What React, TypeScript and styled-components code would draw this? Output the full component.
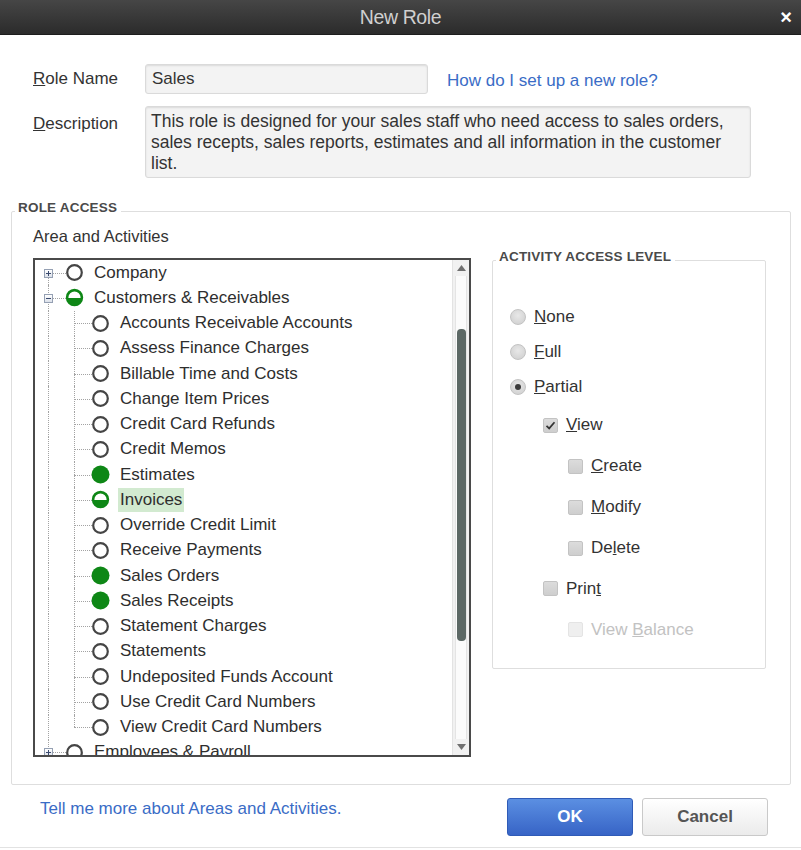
import React from 'react';
import styled, { createGlobalStyle } from 'styled-components';

type NodeState = 'empty' | 'half' | 'full';

type TreeNode = {
  label: string;
  level: 0 | 1;
  state: NodeState;
  expander?: 'plus' | 'minus';
  selected?: boolean;
  first?: boolean;
  last?: boolean;
};

const GREEN = '#0e8716';

const TREE: TreeNode[] = [
  { label: 'Company', level: 0, state: 'empty', expander: 'plus', first: true },
  { label: 'Customers & Receivables', level: 0, state: 'half', expander: 'minus' },
  { label: 'Accounts Receivable Accounts', level: 1, state: 'empty' },
  { label: 'Assess Finance Charges', level: 1, state: 'empty' },
  { label: 'Billable Time and Costs', level: 1, state: 'empty' },
  { label: 'Change Item Prices', level: 1, state: 'empty' },
  { label: 'Credit Card Refunds', level: 1, state: 'empty' },
  { label: 'Credit Memos', level: 1, state: 'empty' },
  { label: 'Estimates', level: 1, state: 'full' },
  { label: 'Invoices', level: 1, state: 'half', selected: true },
  { label: 'Override Credit Limit', level: 1, state: 'empty' },
  { label: 'Receive Payments', level: 1, state: 'empty' },
  { label: 'Sales Orders', level: 1, state: 'full' },
  { label: 'Sales Receipts', level: 1, state: 'full' },
  { label: 'Statement Charges', level: 1, state: 'empty' },
  { label: 'Statements', level: 1, state: 'empty' },
  { label: 'Undeposited Funds Account', level: 1, state: 'empty' },
  { label: 'Use Credit Card Numbers', level: 1, state: 'empty' },
  { label: 'View Credit Card Numbers', level: 1, state: 'empty', last: true },
  { label: 'Employees & Payroll', level: 0, state: 'empty', expander: 'plus' }
];

const GlobalStyle = createGlobalStyle`
  html, body {
    margin: 0;
    padding: 0;
    background: #fff;
  }
  body {
    font-family: 'Liberation Sans', Arial, sans-serif;
    color: #333;
  }
`;

const Dialog = styled.div`
  width: 801px;
  height: 848px;
  box-sizing: border-box;
  display: flex;
  flex-direction: column;
  background: #fff;
  border-bottom: 1px solid #e2e2e2;
`;

const TitleBar = styled.div`
  height: 35px;
  flex-shrink: 0;
  display: grid;
  grid-template-columns: 1fr auto 1fr;
  align-items: center;
  background: linear-gradient(#464646, #2b2b2b);
  border-bottom: 1px solid #1d1d1d;
  box-sizing: border-box;
`;

const Title = styled.div`
  grid-column: 2;
  color: #d0d0d0;
  font-size: 19.5px;
  letter-spacing: -0.4px;
`;

const CloseButton = styled.button`
  justify-self: end;
  margin-right: 9px;
  padding: 0;
  border: 0;
  background: none;
  color: #fff;
  font-family: 'Liberation Sans', Arial, sans-serif;
  font-weight: 700;
  font-size: 20px;
  line-height: 1;
  cursor: pointer;
`;

const Content = styled.div`
  flex: 1;
  padding: 29px 10px 0 11px;
`;

const FormRow = styled.div<{ $top?: number }>`
  display: flex;
  align-items: flex-start;
  padding-left: 22px;
  margin-top: ${(p) => p.$top ?? 0}px;
`;

const FieldLabel = styled.label<{ $padTop: number }>`
  width: 112px;
  flex-shrink: 0;
  padding-top: ${(p) => p.$padTop}px;
  font-size: 17px;
  line-height: 20px;
  color: #333;
`;

const TextField = styled.input`
  width: 283px;
  height: 30px;
  box-sizing: border-box;
  padding: 0 6px;
  border: 1px solid #dadada;
  border-radius: 3px;
  background: #f3f3f3;
  box-shadow: inset 0 1px 2px rgba(0, 0, 0, 0.1);
  font-family: 'Liberation Sans', Arial, sans-serif;
  font-size: 17px;
  color: #333;
  outline: none;
`;

const TextArea = styled.textarea`
  width: 606px;
  height: 72px;
  box-sizing: border-box;
  padding: 4px 5px;
  border: 1px solid #dadada;
  border-radius: 3px;
  background: #f3f3f3;
  box-shadow: inset 0 1px 2px rgba(0, 0, 0, 0.1);
  font-family: 'Liberation Sans', Arial, sans-serif;
  font-size: 17.5px;
  line-height: 21px;
  color: #333;
  resize: none;
  overflow: hidden;
  outline: none;
`;

const Link = styled.a<{ $top?: number; $left?: number }>`
  margin-top: ${(p) => p.$top ?? 0}px;
  margin-left: ${(p) => p.$left ?? 0}px;
  font-size: 17px;
  line-height: 20px;
  color: #3a6cc6;
  text-decoration: none;
  cursor: pointer;
`;

const GroupBox = styled.fieldset<{ $top: number; $pad: string }>`
  margin: ${(p) => p.$top}px 0 0 0;
  padding: ${(p) => p.$pad};
  border: 1px solid #dedede;
  border-radius: 2px;
  min-width: 0;
`;

const Legend = styled.legend`
  margin-left: 3px;
  padding: 0 4px 8px 3px;
  font-size: 13.5px;
  line-height: 15px;
  letter-spacing: 0.2px;
  font-weight: 700;
  color: #4a4a4a;
`;

const AccessBody = styled.div`
  display: flex;
  gap: 21px;
  padding-left: 21px;
`;

const TreeColumn = styled.div`
  width: 438px;
  flex-shrink: 0;
`;

const ColumnHeading = styled.div`
  margin: 3px 0 12px;
  font-size: 16.5px;
  line-height: 20px;
  color: #333;
`;

const TreeBox = styled.div`
  height: 499px;
  box-sizing: border-box;
  display: flex;
  border: 2px solid #4a4a4a;
  background: #fff;
`;

const TreeList = styled.div`
  flex: 1;
  overflow: hidden;
`;

const TreeRow = styled.div`
  height: 25.25px;
  display: flex;
  align-items: center;
`;

const Gutter = styled.span<{
  $width: number;
  $lineX: number;
  $vertical: 'full' | 'top' | 'bottom';
  $branch: number | null;
}>`
  position: relative;
  flex: 0 0 ${(p) => p.$width}px;
  align-self: stretch;

  &::before {
    content: '';
    position: absolute;
    left: ${(p) => p.$lineX}px;
    top: ${(p) => (p.$vertical === 'bottom' ? '50%' : '0')};
    bottom: ${(p) => (p.$vertical === 'top' ? '50%' : '0')};
    border-left: 1px dotted #a3a3a3;
  }

  &::after {
    content: '';
    display: ${(p) => (p.$branch === null ? 'none' : 'block')};
    position: absolute;
    left: ${(p) => p.$branch ?? 0}px;
    right: 0;
    top: 50%;
    border-top: 1px dotted #a3a3a3;
  }
`;

const Expander = styled.span`
  position: absolute;
  left: 9px;
  top: 50%;
  z-index: 1;
  width: 9px;
  height: 9px;
  margin-top: -4px;
  box-sizing: border-box;
  display: grid;
  place-items: center;
  border: 1px solid #95a0b3;
  background: linear-gradient(#ffffff, #dce1ea);
`;

const IconSvg = styled.svg`
  flex-shrink: 0;
  overflow: visible;
`;

const TreeLabel = styled.span<{ $selected?: boolean }>`
  margin-left: 9px;
  padding: 0 2px;
  font-size: 17px;
  line-height: 24px;
  color: #2e2e2e;
  white-space: nowrap;
  background: ${(p) => (p.$selected ? '#d2ead0' : 'transparent')};
`;

const Scrollbar = styled.div`
  width: 16px;
  flex-shrink: 0;
  display: flex;
  flex-direction: column;
  background: #f1f1f1;
  border-left: 1px solid #e3e3e3;
`;

const ArrowButton = styled.div`
  height: 16px;
  flex-shrink: 0;
  display: grid;
  place-items: center;
`;

const Track = styled.div`
  flex: 1;
  margin: 0 2px;
  padding-top: 53px;
  border-left: 1px solid #e4e4e4;
  border-right: 1px solid #e4e4e4;
  background: #fbfbfb;
  display: flex;
  justify-content: center;
`;

const Thumb = styled.div`
  width: 9px;
  height: 312px;
  border-radius: 4px;
  background: #5c6865;
`;

const LevelColumn = styled.div`
  width: 274px;
  flex-shrink: 0;
`;

const OptionRow = styled.div<{ $indent: number; $height: number; $disabled?: boolean }>`
  display: flex;
  align-items: center;
  gap: 8px;
  height: ${(p) => p.$height}px;
  padding-left: ${(p) => p.$indent}px;
  font-size: 17px;
  color: ${(p) => (p.$disabled ? '#c2c2c2' : '#333')};
`;

const Radio = styled.span<{ $checked?: boolean }>`
  width: 16px;
  height: 16px;
  box-sizing: border-box;
  border-radius: 50%;
  border: 1px solid #c3c3c3;
  background: radial-gradient(circle at 50% 40%, #e8e8e8, #cdcdcd);
  display: grid;
  place-items: center;

  &::after {
    content: '';
    display: ${(p) => (p.$checked ? 'block' : 'none')};
    width: 6px;
    height: 6px;
    border-radius: 50%;
    background: #3b3b3b;
  }
`;

const CheckBox = styled.span<{ $disabled?: boolean }>`
  width: 15px;
  height: 15px;
  box-sizing: border-box;
  border-radius: 2px;
  border: 1px solid ${(p) => (p.$disabled ? '#e4e4e4' : '#c3c3c3')};
  background: ${(p) => (p.$disabled ? '#efefef' : 'linear-gradient(#dcdcdc, #cecece)')};
  display: grid;
  place-items: center;
`;

const Footer = styled.div`
  display: flex;
  align-items: flex-start;
  padding: 13px 23px 0 29px;
`;

const ButtonGroup = styled.div`
  margin-left: auto;
  display: flex;
  gap: 9px;
`;

const Button = styled.button<{ $primary?: boolean }>`
  width: 126px;
  height: 38px;
  border-radius: 3px;
  border: 1px solid ${(p) => (p.$primary ? '#2f5bb7' : '#c9c9c9')};
  background: ${(p) => (p.$primary ? 'linear-gradient(#5b8fe2, #3764c6)' : 'linear-gradient(#ffffff, #ebebeb)')};
  color: ${(p) => (p.$primary ? '#fff' : '#555')};
  font-family: 'Liberation Sans', Arial, sans-serif;
  font-size: 17px;
  font-weight: 700;
  cursor: pointer;
`;

function StatusIcon({ state }: { state: NodeState }) {
  return (
    <IconSvg width={17} height={17} viewBox="0 0 17 17">
      {state === 'empty' && <circle cx="8.5" cy="8.5" r="7.3" fill="#fff" stroke="#454545" strokeWidth="2.2" />}
      {state === 'full' && <circle cx="8.5" cy="8.5" r="9" fill={GREEN} />}
      {state === 'half' && (
        <>
          <circle cx="8.5" cy="8.5" r="7.4" fill="#fff" stroke={GREEN} strokeWidth="2.6" />
          <path d="M0.9 8.9 H16.1 A7.6 7.6 0 0 1 0.9 8.9 Z" fill={GREEN} />
        </>
      )}
    </IconSvg>
  );
}

function ExpanderGlyph({ kind }: { kind: 'plus' | 'minus' }) {
  return (
    <svg width="5" height="5" viewBox="0 0 5 5">
      <rect x="0" y="2" width="5" height="1" fill="#3a4a6e" />
      {kind === 'plus' && <rect x="2" y="0" width="1" height="5" fill="#3a4a6e" />}
    </svg>
  );
}

function TreeItem({ node }: { node: TreeNode }) {
  if (node.level === 0) {
    return (
      <TreeRow>
        <Gutter $width={31} $lineX={13} $vertical={node.first ? 'bottom' : 'full'} $branch={18}>
          {node.expander && (
            <Expander>
              <ExpanderGlyph kind={node.expander} />
            </Expander>
          )}
        </Gutter>
        <StatusIcon state={node.state} />
        <TreeLabel $selected={node.selected}>{node.label}</TreeLabel>
      </TreeRow>
    );
  }
  return (
    <TreeRow>
      <Gutter $width={31} $lineX={13} $vertical="full" $branch={null} />
      <Gutter $width={26} $lineX={8} $vertical={node.last ? 'top' : 'full'} $branch={8} />
      <StatusIcon state={node.state} />
      <TreeLabel $selected={node.selected}>{node.label}</TreeLabel>
    </TreeRow>
  );
}

function CheckMark() {
  return (
    <svg width="11" height="11" viewBox="0 0 11 11">
      <path d="M1.5 5.8 L4.2 8.4 L9.5 2.2" fill="none" stroke="#333" strokeWidth="1.7" />
    </svg>
  );
}

function Arrow({ dir }: { dir: 'up' | 'down' }) {
  return (
    <svg width="9" height="6" viewBox="0 0 9 6">
      <path d={dir === 'up' ? 'M0 6 L4.5 0 L9 6 Z' : 'M0 0 L9 0 L4.5 6 Z'} fill="#707070" />
    </svg>
  );
}

const DESCRIPTION =
  'This role is designed for your sales staff who need access to sales orders, sales recepts, sales reports, estimates and all information in the customer list.';

export default function App() {
  return (
    <>
      <GlobalStyle />
      <Dialog>
        <TitleBar>
          <Title>New Role</Title>
          <CloseButton aria-label="Close">×</CloseButton>
        </TitleBar>
        <Content>
          <FormRow>
            <FieldLabel $padTop={5}>
              <u>R</u>ole Name
            </FieldLabel>
            <TextField value="Sales" readOnly />
            <Link $top={7} $left={19}>
              How do I set up a new role?
            </Link>
          </FormRow>
          <FormRow $top={12}>
            <FieldLabel $padTop={8}>
              <u>D</u>escription
            </FieldLabel>
            <TextArea value={DESCRIPTION} readOnly />
          </FormRow>

          <GroupBox $top={22} $pad="0 0 27px 0">
            <Legend>ROLE ACCESS</Legend>
            <AccessBody>
              <TreeColumn>
                <ColumnHeading>Area and Activities</ColumnHeading>
                <TreeBox>
                  <TreeList>
                    {TREE.map((node) => (
                      <TreeItem key={node.label} node={node} />
                    ))}
                  </TreeList>
                  <Scrollbar>
                    <ArrowButton>
                      <Arrow dir="up" />
                    </ArrowButton>
                    <Track>
                      <Thumb />
                    </Track>
                    <ArrowButton>
                      <Arrow dir="down" />
                    </ArrowButton>
                  </Scrollbar>
                </TreeBox>
              </TreeColumn>

              <LevelColumn>
                <GroupBox $top={26} $pad="27px 0 18px 0">
                  <Legend>ACTIVITY ACCESS LEVEL</Legend>
                  <OptionRow $indent={17} $height={35.3}>
                    <Radio />
                    <span>
                      <u>N</u>one
                    </span>
                  </OptionRow>
                  <OptionRow $indent={17} $height={35.3}>
                    <Radio />
                    <span>
                      <u>F</u>ull
                    </span>
                  </OptionRow>
                  <OptionRow $indent={17} $height={35.3}>
                    <Radio $checked />
                    <span>
                      <u>P</u>artial
                    </span>
                  </OptionRow>
                  <OptionRow $indent={50} $height={40.9}>
                    <CheckBox>
                      <CheckMark />
                    </CheckBox>
                    <span>
                      <u>V</u>iew
                    </span>
                  </OptionRow>
                  <OptionRow $indent={75} $height={40.9}>
                    <CheckBox />
                    <span>
                      <u>C</u>reate
                    </span>
                  </OptionRow>
                  <OptionRow $indent={75} $height={40.9}>
                    <CheckBox />
                    <span>
                      <u>M</u>odify
                    </span>
                  </OptionRow>
                  <OptionRow $indent={75} $height={40.9}>
                    <CheckBox />
                    <span>
                      De<u>l</u>ete
                    </span>
                  </OptionRow>
                  <OptionRow $indent={50} $height={40.9}>
                    <CheckBox />
                    <span>
                      Prin<u>t</u>
                    </span>
                  </OptionRow>
                  <OptionRow $indent={75} $height={40.9} $disabled>
                    <CheckBox $disabled />
                    <span>
                      View <u>B</u>alance
                    </span>
                  </OptionRow>
                </GroupBox>
              </LevelColumn>
            </AccessBody>
          </GroupBox>

          <Footer>
            <Link $top={1}>Tell me more about Areas and Activities.</Link>
            <ButtonGroup>
              <Button $primary>OK</Button>
              <Button>Cancel</Button>
            </ButtonGroup>
          </Footer>
        </Content>
      </Dialog>
    </>
  );
}
